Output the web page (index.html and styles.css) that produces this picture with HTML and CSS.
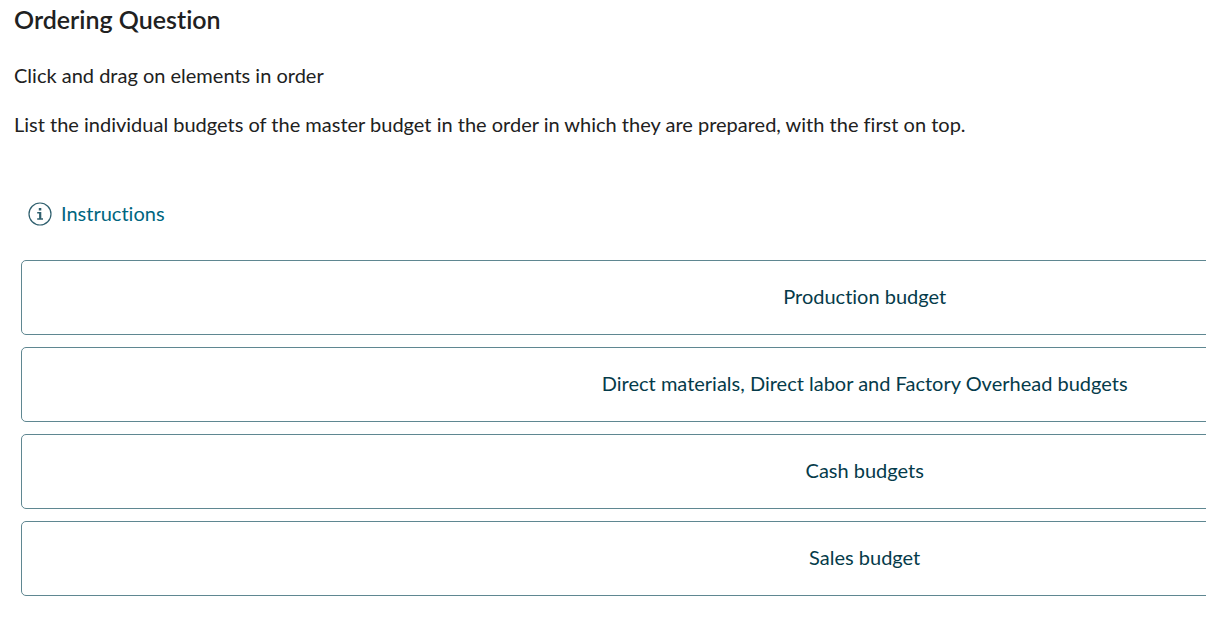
FILE: index.html
```html
<!DOCTYPE html>
<html lang="en">
<head>
<meta charset="utf-8">
<meta name="viewport" content="width=device-width, initial-scale=1">
<title>Ordering Question</title>
<link rel="stylesheet" href="styles.css">
</head>
<body>
<main class="question">
  <header class="prompt">
    <h1 class="prompt-title">Ordering Question</h1>
    <p class="prompt-text">Click and drag on elements in order</p>
    <p class="prompt-text">List the individual budgets of the master budget in the order in which they are prepared, with the first on top.</p>
  </header>
  <button class="instructions" type="button">
    <svg class="instructions-icon" viewBox="0 0 24 24" aria-hidden="true">
      <circle cx="12" cy="12" r="11" fill="none" stroke="currentColor" stroke-width="1.2"/>
      <path d="M10.8 6h2.5v2.5h-2.5zM9.2 10h4.1v6.2h1.7v1.5H9.2v-1.5h1.9v-4.7H9.2z" fill="currentColor"/>
    </svg>
    <span>Instructions</span>
  </button>
  <ol class="choices">
    <li class="choice" draggable="true" tabindex="0">Production budget</li>
    <li class="choice" draggable="true" tabindex="0">Direct materials, Direct labor and Factory Overhead budgets</li>
    <li class="choice" draggable="true" tabindex="0">Cash budgets</li>
    <li class="choice" draggable="true" tabindex="0">Sales budget</li>
  </ol>
</main>
</body>
</html>
```
FILE: styles.css
```css
* {
  box-sizing: border-box;
}

body {
  margin: 0;
  background: #fff;
  color: #212121;
  font-family: Lato, "Open Sans", sans-serif;
  font-size: 20px;
  font-variant-ligatures: none;
  line-height: 25px;
}

.question {
  overflow-x: hidden;
  padding: 3px 0 24px;
}

.prompt {
  display: flex;
  flex-direction: column;
  gap: 24px;
  padding: 0 14px;
}

.prompt-title {
  margin: 0 0 4px;
  font-size: 25px;
  font-weight: 600;
  line-height: 32px;
}

.prompt-text {
  margin: 0;
}

.instructions {
  display: flex;
  align-items: center;
  gap: 9px;
  margin: 64px 0 34px 28px;
  padding: 0;
  border: 0;
  background: none;
  color: #006580;
  font: inherit;
  font-variant-ligatures: none;
  cursor: pointer;
}

.instructions-icon {
  width: 24px;
  height: 24px;
  color: #2f5f6e;
}

/* The list is wider than its frame and runs past the right edge. */
.choices {
  display: grid;
  gap: 12px;
  width: calc(140% + 20px);
  margin: 0;
  padding: 0 0 0 21px;
  list-style: none;
}

.choice {
  display: flex;
  align-items: center;
  justify-content: center;
  min-height: 75px;
  padding: 12px 24px 14px;
  border: 1px solid #5f8791;
  border-radius: 5px;
  background: #fff;
  color: #053b4a;
  cursor: grab;
}
```
